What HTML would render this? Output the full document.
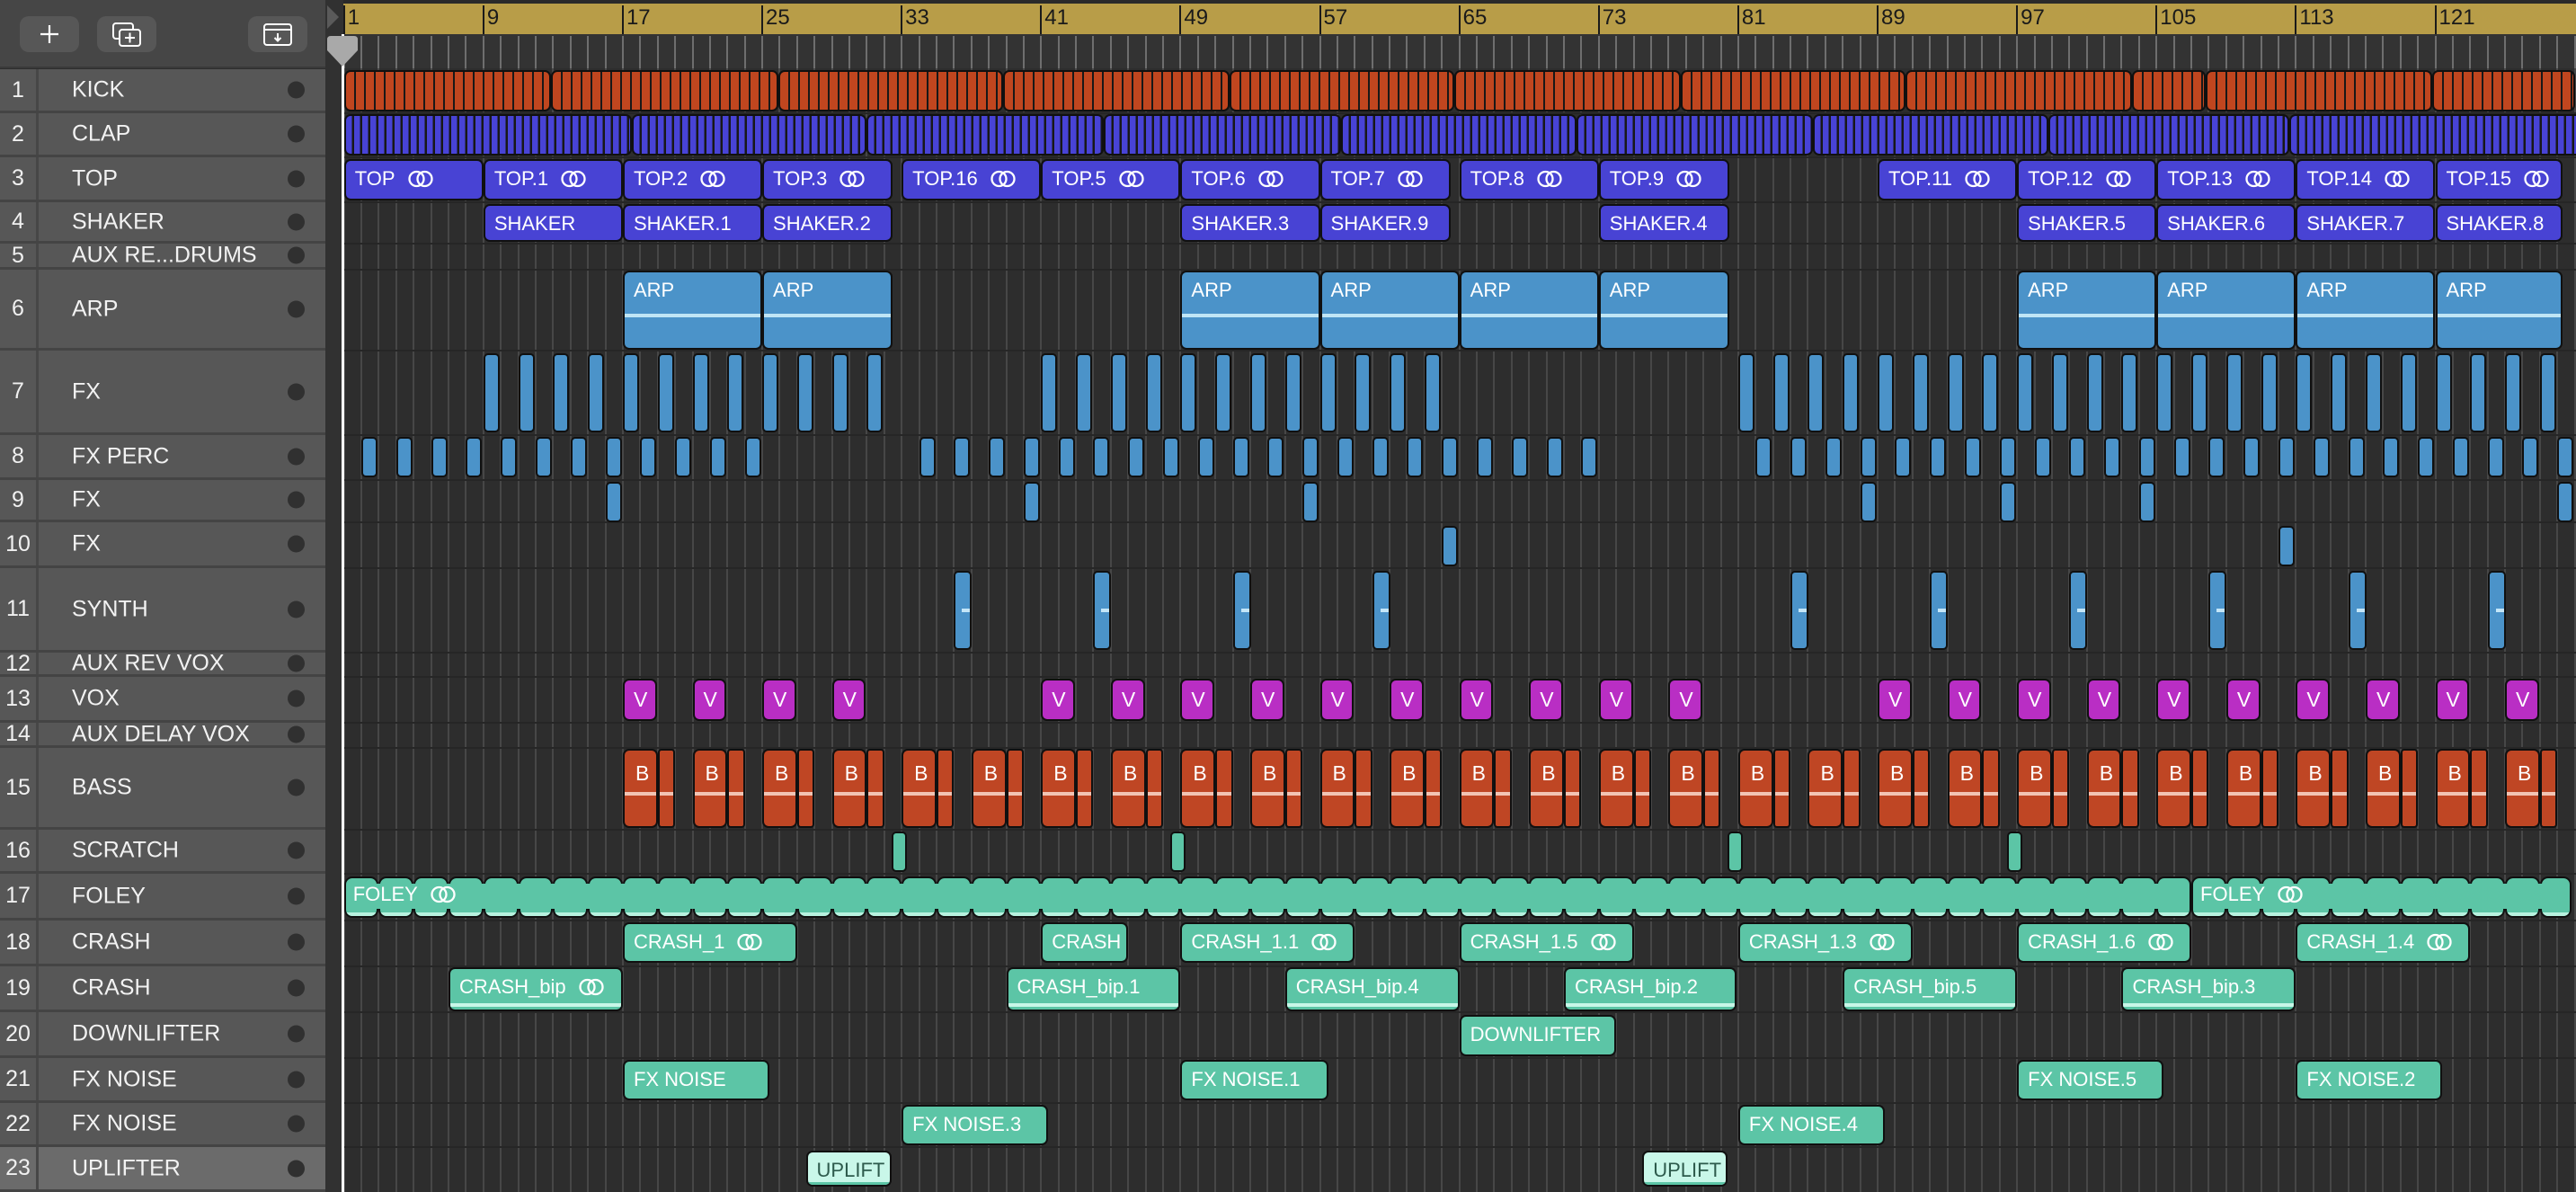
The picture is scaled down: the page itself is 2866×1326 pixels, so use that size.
<!DOCTYPE html>
<html><head><meta charset="utf-8">
<style>
*{margin:0;padding:0;box-sizing:border-box}
html,body{width:2866px;height:1326px;overflow:hidden;background:#2d2d2d;font-family:"Liberation Sans",sans-serif}
#root{position:relative;width:2866px;height:1326px}
.a{position:absolute}
.row{position:absolute;left:0;width:362px;background:#575757;border-bottom:3px solid #444}
.num{position:absolute;left:0;top:0;bottom:0;width:43px;border-right:3px solid #474747;color:#f0f0f0;font-size:25px;text-align:center;display:flex;align-items:center;justify-content:center}
.nm{position:absolute;left:80px;color:#f2f2f2;font-size:25px;white-space:nowrap;top:50%;transform:translateY(-50%)}
.dot{position:absolute;left:320px;width:19px;height:19px;border-radius:50%;background:#303030;top:50%;transform:translateY(-50%)}
.r{position:absolute;border:2px solid #101010;border-radius:7px;overflow:hidden;color:#fff;font-size:22px;white-space:nowrap}
.r span{position:absolute;left:10px;top:7px;display:flex;align-items:center}
.r svg{margin-left:14px}
.btn{position:absolute;top:18px;height:40px;width:66px;background:#575757;border-radius:10px}
</style></head><body><div id="root">
<div class="a" style="left:0;top:0;width:362px;height:76px;background:#464646;border-bottom:2px solid #3a3a3a"></div>
<div class="btn" style="left:22px"><svg width="66" height="40"><path d="M33 10v20M23 20h20" stroke="#fff" stroke-width="2.2"/></svg></div>
<div class="btn" style="left:108px"><svg width="66" height="40"><rect x="18" y="8" width="22" height="17" rx="3" fill="none" stroke="#fff" stroke-width="2"/><rect x="25" y="15" width="23" height="18" rx="3" fill="#575757" stroke="#fff" stroke-width="2"/><path d="M36.5 18.5v11M31 24h11" stroke="#fff" stroke-width="2"/></svg></div>
<div class="btn" style="left:276px"><svg width="66" height="40"><rect x="18" y="9" width="30" height="23" rx="3" fill="none" stroke="#fff" stroke-width="2"/><path d="M18 15h30M33 19v8M29.5 24l3.5 3.5 3.5-3.5" stroke="#fff" stroke-width="2" fill="none"/></svg></div>
<div class="a" style="left:362px;top:0;width:20px;height:1326px;background:#313131"></div>
<svg class="a" style="left:362px;top:4px" width="18" height="30"><path d="M2 2l13 13-13 13z" fill="#5a5a5a"/></svg>
<div id="tracks"></div>
<div class="a" style="left:382px;top:0;width:2484px;height:4px;background:#2a2a2a"></div>
<div class="a" style="left:382px;top:4px;width:2484px;height:34px;background:#b89d48"></div>
<div class="a" style="left:382px;top:38px;width:2484px;height:38px;background:#333"></div>
<div id="grid"></div>
<div id="regs"></div>
<div class="a" style="left:380px;top:38px;width:3px;height:1288px;background:#fff"></div>
<svg class="a" style="left:364px;top:40px" width="34" height="34"><path d="M4 0h26q4 0 4 4v12l-17 18-17-18v-12q0-4 4-4z" fill="#a9a9a9"/></svg>
</div>
<script>
var B0=382.7,BW=19.39;function X(b){return B0+(b-1)*BW}
var tops=[77,126,175,225,271,300,390,484,534,581,632,726,753,804,832,923,972,1024,1075,1126,1177,1227,1276,1326];
var names=["KICK","CLAP","TOP","SHAKER","AUX RE...DRUMS","ARP","FX","FX PERC","FX","FX","SYNTH","AUX REV VOX","VOX","AUX DELAY VOX","BASS","SCRATCH","FOLEY","CRASH","CRASH","DOWNLIFTER","FX NOISE","FX NOISE","UPLIFTER"];
var h="";
for(var i=0;i<23;i++){var t=tops[i],hh=tops[i+1]-t;
h+='<div class="row" style="top:'+t+'px;height:'+hh+'px;'+(i==22?'background:#6b6b6b;':'')+'"><div class="num">'+(i+1)+'</div><div class="nm">'+names[i]+'</div><div class="dot"></div></div>';}
document.getElementById('tracks').innerHTML=h;
var g="";
for(var b=1;b<=129;b++){var x=X(b);
g+='<div class="a" style="left:'+(x-1)+'px;top:76px;width:2px;height:1250px;background:#474747"></div>';
g+='<div class="a" style="left:'+(x-1)+'px;top:40px;width:2px;height:36px;background:#6e6e6e"></div>';}
for(var i=1;i<23;i++){g+='<div class="a" style="left:382px;top:'+(tops[i]-1)+'px;width:2484px;height:2px;background:#262626"></div>';}
for(var b=1;b<=121;b+=8){var x=X(b);
g+='<div class="a" style="left:'+(x-1)+'px;top:6px;width:2px;height:32px;background:#1a1a1a"></div><div class="a" style="left:'+(x+4)+'px;top:6px;font-size:24px;color:#1a1a1a">'+b+'</div>';}
document.getElementById('grid').innerHTML=g;
var loop='<svg width="28" height="20"><circle cx="9.5" cy="10" r="8" fill="none" stroke="#fff" stroke-width="2.3"/><circle cx="18.5" cy="10" r="8" fill="none" stroke="#fff" stroke-width="2.3"/></svg>';
var R="";
function reg(b1,b2,y1,y2,col,lab,o){o=o||{};var x1=X(b1),x2=X(b2);
var s='<div class="r" style="left:'+x1+'px;top:'+y1+'px;width:'+(x2-x1)+'px;height:'+(y2-y1)+'px;background:'+col+';'+(o.st||'')+'">';
if(o.line)s+='<div class="a" style="left:0;right:0;top:'+o.line+'px;height:4px;background:'+(o.lc||'#bfe5f5')+'"></div>';
if(lab)s+='<span style="'+(o.ls||'')+'">'+lab+(o.loop?loop:'')+'</span>';
R+=s+'</div>';}
var kb=[1,12.9,25.9,38.8,51.8,64.7,77.7,90.6,103.6,107.8,120.8,129];
for(var i=0;i<kb.length-1;i++)reg(kb[i],kb[i+1],78,124,'#c0461f','',{st:'background:repeating-linear-gradient(90deg,#c0461f 0 9px,#181818 9px 11px)'});
var cb=[1,17.5,31,44.6,58.2,71.7,85.3,98.8,112.6,129.5];
for(var i=0;i<cb.length-1;i++)reg(cb[i],cb[i+1],127,173,'#4843d6','',{st:'background:repeating-linear-gradient(90deg,#4843d6 0 6.5px,#181818 6.5px 9px)'});
var T=[[1,9,"TOP"],[9,17,"TOP.1"],[17,25,"TOP.2"],[25,32.5,"TOP.3"],[33,41,"TOP.16"],[41,49,"TOP.5"],[49,57,"TOP.6"],[57,64.5,"TOP.7"],[65,73,"TOP.8"],[73,80.5,"TOP.9"],[89,97,"TOP.11"],[97,105,"TOP.12"],[105,113,"TOP.13"],[113,121,"TOP.14"],[121,128.3,"TOP.15"]];
T.forEach(function(a){reg(a[0],a[1],177,223,'#4843d4',a[2],{loop:1})});
var S=[[9,17,"SHAKER"],[17,25,"SHAKER.1"],[25,32.5,"SHAKER.2"],[49,57,"SHAKER.3"],[57,64.5,"SHAKER.9"],[73,80.5,"SHAKER.4"],[97,105,"SHAKER.5"],[105,113,"SHAKER.6"],[113,121,"SHAKER.7"],[121,128.3,"SHAKER.8"]];
S.forEach(function(a){reg(a[0],a[1],227,269,'#4843d4',a[2])});
[[17,25],[25,32.5],[49,57],[57,65],[65,73],[73,80.5],[97,105],[105,113],[113,121],[121,128.3]].forEach(function(a){reg(a[0],a[1],301,389,'#4b93c9','ARP',{line:46})});
var blue='#4b93c9';
function small(b,w,y1,y2,col,mark){var x=X(b);R+='<div class="r" style="left:'+x+'px;top:'+y1+'px;width:'+w+'px;height:'+(y2-y1)+'px;background:'+col+';border-radius:5px">'+(mark?'<div class="a" style="right:0;top:'+((y2-y1)/2-4)+'px;width:9px;height:4px;background:#c4e6f8"></div>':'')+'</div>';}
for(var b=9;b<129;b+=2){if((b>=9&&b<33)||(b>=41&&b<65)||(b>=81))small(b,18,393,481,blue);}
for(var b=2;b<=128;b+=2){if(b<=24||(b>=34&&b<=72)||b>=82)small(b,18,486,531,blue);}
[16,40,56,88,96,104,128].forEach(function(b){small(b,18,536,581,blue)});
[64,112].forEach(function(b){small(b,18,585,630,blue)});
[36,44,52,60,84,92,100,108,116,124].forEach(function(b){small(b,20,635,723,blue,1)});
[17,21,25,29,41,45,49,53,57,61,65,69,73,77,89,93,97,101,105,109,113,117,121,125].forEach(function(b){reg(b,b+1.95,755,802,'#b92ec4','V',{ls:'left:10px;top:8px;font-size:23px'})});
for(var b=17;b<129;b+=4){reg(b,b+2,833,921,'#bf4624','B',{line:46,lc:'#f2c4b4',ls:'left:12px;top:12px;font-size:23px'});if(b+3.05<=129.5)reg(b+2,b+3,833,921,'#bf4624','',{line:46,lc:'#f2c4b4',st:'border-radius:4px'});}
var teal='#5cc5a6';
[32.4,48.4,80.4,96.4].forEach(function(b){small(b,17,925,970,teal)});
for(var b=1;b<128;b+=2){reg(b,Math.min(b+2,128.8),975,1021,teal,'',{line:38,lc:'#b8f2df',st:'border-radius:9px'})}
R+='<div class="a" style="left:'+(X(1)+6)+'px;top:983px;width:'+(X(107)-X(1)-12)+'px;height:28px;background:#5cc5a6"></div>';
R+='<div class="a" style="left:'+(X(107)+6)+'px;top:983px;width:'+(X(128.8)-X(107)-12)+'px;height:28px;background:#5cc5a6"></div>';
reg(1,3,975,1021,'transparent','FOLEY',{loop:1,st:'border:none;overflow:visible'});
reg(107,109,975,1021,'transparent','FOLEY',{loop:1,st:'border:none;overflow:visible'});
[[17,27,"CRASH_1",1],[41,46,"CRASH",0],[49,59,"CRASH_1.1",1],[65,75,"CRASH_1.5",1],[81,91,"CRASH_1.3",1],[97,107,"CRASH_1.6",1],[113,123,"CRASH_1.4",1]].forEach(function(a){reg(a[0],a[1],1026,1071,teal,a[2],{loop:a[3]})});
[[7,17,"CRASH_bip",1],[39,49,"CRASH_bip.1",0],[55,65,"CRASH_bip.4",0],[71,80.9,"CRASH_bip.2",0],[87,97,"CRASH_bip.5",0],[103,113,"CRASH_bip.3",0]].forEach(function(a){reg(a[0],a[1],1076,1125,teal,a[2],{loop:a[3],line:38,lc:'#c8f7e8'})});
reg(65,74,1129,1175,teal,'DOWNLIFTER');
[[17,25.4,"FX NOISE"],[49,57.5,"FX NOISE.1"],[97,105.4,"FX NOISE.5"],[113,121.4,"FX NOISE.2"]].forEach(function(a){reg(a[0],a[1],1179,1224,teal,a[2])});
[[33,41.4,"FX NOISE.3"],[81,89.4,"FX NOISE.4"]].forEach(function(a){reg(a[0],a[1],1229,1274,teal,a[2])});
[[27.5,32.4],[75.5,80.4]].forEach(function(a){reg(a[0],a[1],1280,1320,'#c9f7e9','UPLIFT',{line:33,lc:'#5cc5a6',st:'color:#2d5a4c'})});
document.getElementById('regs').innerHTML=R;
</script>
</body></html>
